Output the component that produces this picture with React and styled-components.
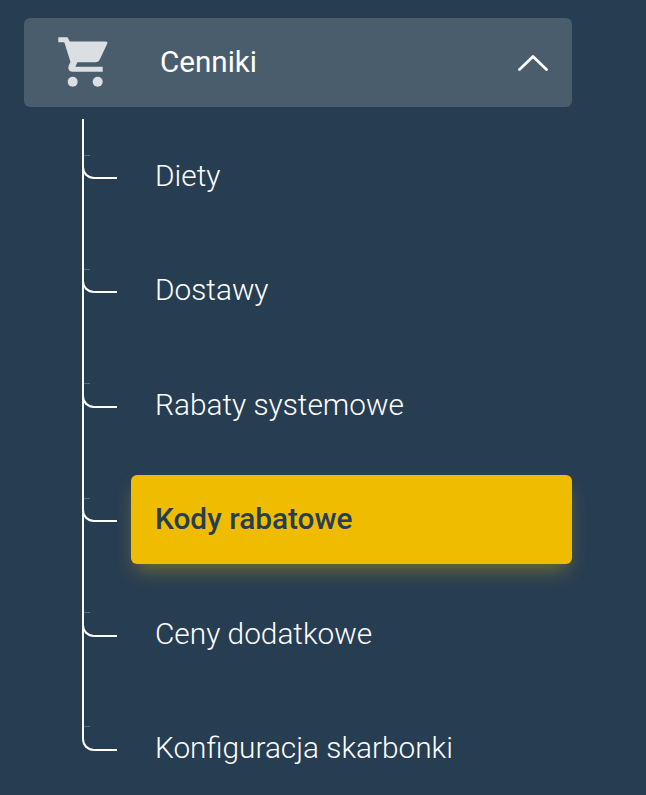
import styled, { createGlobalStyle } from "styled-components";

const items = [
    { name: "Diety" },
    { name: "Dostawy" },
    { name: "Rabaty systemowe" },
    { name: "Kody rabatowe", active: true },
    { name: "Ceny dodatkowe" },
    { name: "Konfiguracja skarbonki" },
];

const GlobalStyle = createGlobalStyle`
    html, body {
        margin: 0;
        height: 100%;
        overflow: hidden;
        background-color: #273d52;
        font-family: Roboto, "Liberation Sans", sans-serif;
    }
`;

export default function App() {
    return (
        <>
            <GlobalStyle />
            <Nav>
                <Header>
                    <CartIcon />
                    <HeaderTitle>Cenniki</HeaderTitle>
                    <ChevronIcon />
                </Header>
                <Tree>
                    {items.map(item => (
                        <Row key={item.name} $active={item.active}>{item.name}</Row>
                    ))}
                </Tree>
            </Nav>
        </>
    );
}

function CartIcon() {
    return (
        <CartSvg viewBox="0 0 65 65">
            <path d="M8.300 7.300H17.500L19.800 11.500H55.500Q58 11.500 57.200 13.800L50 29Q48.500 32.300 45.500 32.300H27.500L25.300 36.700H52.700V41.700H23Q18.300 41.700 18.300 37.500Q18.300 35.500 20.500 32L14.300 12.300H8.300Z" fill="#dcdfe2" />
            <circle cx="22.700" cy="51.700" r="5" fill="#dcdfe2" />
            <circle cx="47.700" cy="51.700" r="5" fill="#dcdfe2" />
        </CartSvg>
    );
}

function ChevronIcon() {
    return (
        <ChevronSvg viewBox="0 0 30 16">
            <polyline points="1.500,14.500 15,1.500 28.500,14.500" fill="none" stroke="#ffffff" strokeWidth="2.800" strokeLinecap="round" strokeLinejoin="round" />
        </ChevronSvg>
    );
}

const Nav = styled.nav`
    width: 548px;
    margin: 18px 0 0 24px;
`;

const Header = styled.div`
    display: flex;
    align-items: center;
    height: 89px;
    padding: 0 24px 0 26px;
    box-sizing: border-box;
    border-radius: 6px;
    background-color: #4a5d6c;
`;

const CartSvg = styled.svg`
    width: 65px;
    height: 65px;
    flex-shrink: 0;
`;

const HeaderTitle = styled.span`
    flex: 1;
    margin: 0 0 2px 45px;
    color: #ffffff;
    font-size: 29.600px;
    font-weight: 400;
`;

const ChevronSvg = styled.svg`
    width: 30px;
    height: 16px;
    flex-shrink: 0;
`;

const Tree = styled.div`
    position: relative;
    display: flex;
    flex-direction: column;
    gap: 25.4px;
    margin: 12px 0 0 58px;
    padding: 13px 0 0 49px;

    &::before {
        content: "";
        position: absolute;
        top: 0;
        left: 0;
        bottom: 66px;
        width: 2px;
        background-color: #ffffff;
    }
`;

const Row = styled.div`
    position: relative;
    display: flex;
    align-items: center;
    height: 89px;
    padding: 0 0 2px 24px;
    box-sizing: border-box;
    border-radius: 6px;
    font-size: 29.800px;
    font-weight: ${props => (props.$active ? 500 : 300)};
    color: ${props => (props.$active ? "#273d52" : "#ffffff")};
    background-color: ${props => (props.$active ? "#f0bc00" : "transparent")};
    box-shadow: ${props => (props.$active ? "0 10px 20px -5px rgba(240, 189, 0, 0.4)" : "none")};

    &::before {
        content: "";
        position: absolute;
        top: 23px;
        left: -49px;
        width: 35px;
        height: 24px;
        box-sizing: border-box;
        border-left: 2px solid #ffffff;
        border-bottom: 2px solid #ffffff;
        border-bottom-left-radius: 12px;
    }

    &::after {
        content: "";
        position: absolute;
        top: 22.500px;
        left: -47px;
        width: 6px;
        height: 1px;
        background-color: rgba(255, 255, 255, 0.25);
    }
`;
